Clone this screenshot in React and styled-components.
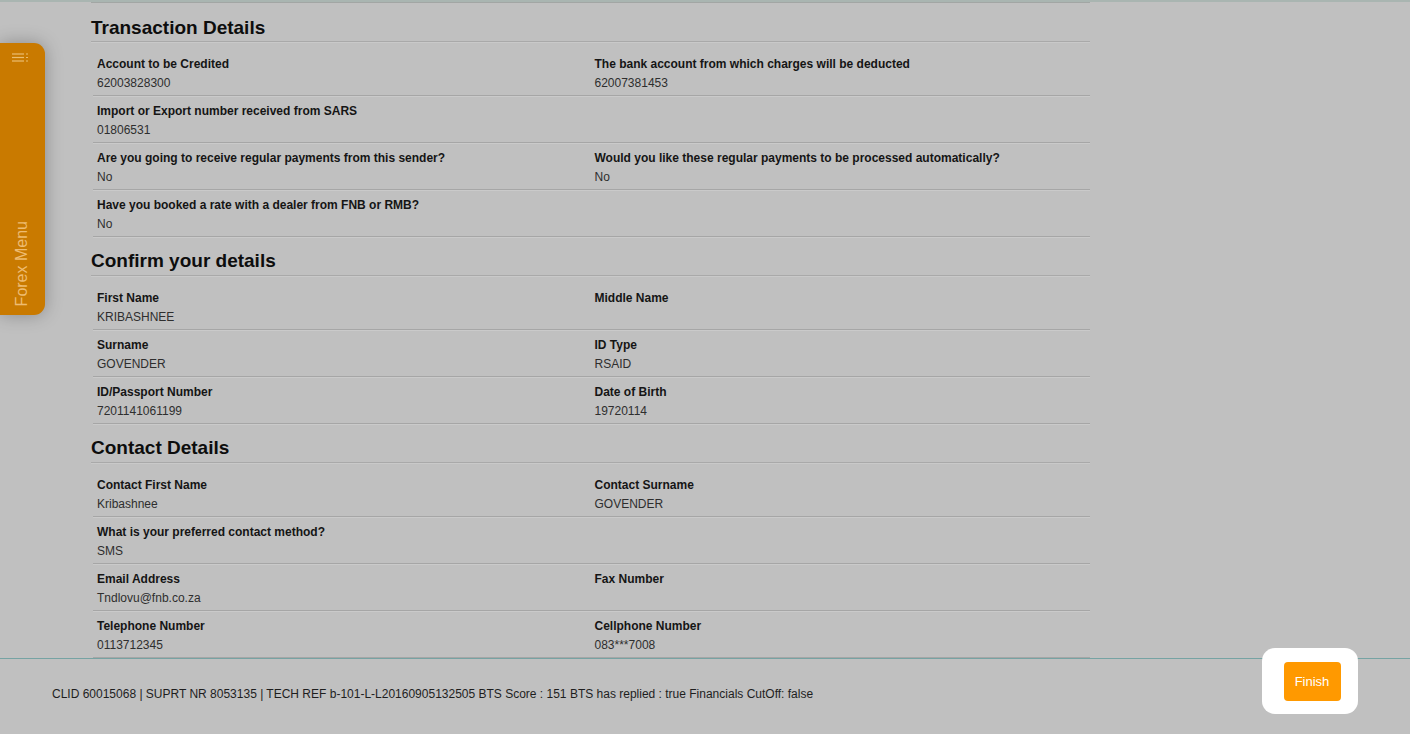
import React from 'react';
import styled, { createGlobalStyle } from 'styled-components';

const GlobalStyle = createGlobalStyle`
    html, body {
        margin: 0;
        padding: 0;
        background: #c0c0c0;
        font-family: "Liberation Sans", Arial, sans-serif;
    }
`;

const Page = styled.div`
    position: relative;
    width: 1410px;
    height: 734px;
    display: flex;
    flex-direction: column;
    overflow: hidden;
    background: #c0c0c0;
`;

const Main = styled.div`
    height: 656px;
    overflow: hidden;
    border-top: 2px solid #a9b5b1;
`;

const Content = styled.div`
    width: 999px;
    margin-left: 91px;
    border-top: 1px solid #a2a6a4;
`;

const Heading = styled.h2`
    margin: 13px 0 0 0;
    padding: 0 0 1px 0;
    font-size: 19px;
    line-height: 24px;
    font-weight: bold;
    color: #0d0d0d;
    border-bottom: 1px solid #a9a9a9;
    box-shadow: 0 1px 0 #c9c9c9;
`;

const Section = styled.div`
    & + & ${Heading} {
        margin-top: 12px;
        padding-bottom: 2px;
    }
`;

const Rows = styled.div`
    padding-top: 7px;
`;

const Row = styled.div`
    display: grid;
    grid-template-columns: 1fr 1fr;
    margin-left: 2px;
    border-bottom: 1px solid #a6a6a6;
    box-shadow: 0 1px 0 #cacaca;
`;

const Field = styled.div`
    padding: 8px 4px 5px 4px;

    & + & {
        margin-left: -1px;
    }
`;

const Label = styled.div`
    font-size: 12px;
    line-height: 14px;
    font-weight: bold;
    color: #151515;
`;

const Value = styled.div`
    margin-top: 5px;
    font-size: 12px;
    line-height: 14px;
    min-height: 14px;
    color: #2e2e2e;
`;

const Footer = styled.div`
    flex: 1;
    display: flex;
    justify-content: space-between;
    align-items: flex-start;
    border-top: 1px solid #76a3a3;
    padding: 0 52px;
`;

const FooterText = styled.div`
    margin-top: 28px;
    font-size: 12px;
    line-height: 14px;
    color: #1e1e1e;
`;

const Spotlight = styled.div`
    margin-top: -11px;
    width: 96px;
    height: 66px;
    background: #ffffff;
    border-radius: 13px;
    display: flex;
    align-items: center;
    justify-content: center;
    padding-left: 4px;
    box-sizing: border-box;
    position: relative;
`;

const FinishButton = styled.button`
    width: 57px;
    height: 39px;
    border: none;
    border-radius: 4px;
    background: #ff9900;
    color: #ffffff;
    font-family: "Liberation Sans", Arial, sans-serif;
    font-size: 13px;
    padding: 0;
    cursor: pointer;
`;

const MenuTab = styled.div`
    position: absolute;
    left: 0;
    top: 43px;
    width: 45px;
    height: 272px;
    background: #c97a00;
    border-radius: 0 11px 11px 0;
    box-shadow: 0 0 18px rgba(0, 0, 0, 0.28);
    display: flex;
    flex-direction: column;
    align-items: center;
    justify-content: space-between;
    padding: 10px 0 9px 0;
    box-sizing: border-box;
`;

const MenuIcon = styled.svg`
    margin-right: 6px;
    opacity: 0.8;
`;

const MenuLabel = styled.div`
    writing-mode: vertical-rl;
    transform: rotate(180deg);
    font-size: 16px;
    color: #eebc72;
    margin-right: 2px;
`;

const sections = [
    {
        title: 'Transaction Details',
        rows: [
            [['Account to be Credited', '62003828300'], ['The bank account from which charges will be deducted', '62007381453']],
            [['Import or Export number received from SARS', '01806531']],
            [['Are you going to receive regular payments from this sender?', 'No'], ['Would you like these regular payments to be processed automatically?', 'No']],
            [['Have you booked a rate with a dealer from FNB or RMB?', 'No']],
        ],
    },
    {
        title: 'Confirm your details',
        rows: [
            [['First Name', 'KRIBASHNEE'], ['Middle Name', '']],
            [['Surname', 'GOVENDER'], ['ID Type', 'RSAID']],
            [['ID/Passport Number', '7201141061199'], ['Date of Birth', '19720114']],
        ],
    },
    {
        title: 'Contact Details',
        rows: [
            [['Contact First Name', 'Kribashnee'], ['Contact Surname', 'GOVENDER']],
            [['What is your preferred contact method?', 'SMS']],
            [['Email Address', 'Tndlovu@fnb.co.za'], ['Fax Number', '']],
            [['Telephone Number', '0113712345'], ['Cellphone Number', '083***7008']],
        ],
    },
];

function App() {
    return (
        <Page>
            <GlobalStyle />
            <Main>
                <Content>
                    {sections.map(section => (
                        <Section key={section.title}>
                            <Heading>{section.title}</Heading>
                            <Rows>
                                {section.rows.map((row, i) => (
                                    <Row key={i}>
                                        {row.map(([label, value]) => (
                                            <Field key={label}>
                                                <Label>{label}</Label>
                                                <Value>{value}</Value>
                                            </Field>
                                        ))}
                                    </Row>
                                ))}
                            </Rows>
                        </Section>
                    ))}
                </Content>
            </Main>
            <Footer>
                <FooterText>
                    CLID 60015068 | SUPRT NR 8053135 | TECH REF b-101-L-L20160905132505 BTS Score : 151 BTS has replied : true Financials CutOff: false
                </FooterText>
                <Spotlight>
                    <FinishButton>Finish</FinishButton>
                </Spotlight>
            </Footer>
            <MenuTab>
                <MenuIcon width="18" height="9" viewBox="0 0 18 9">
                    <g stroke="#f4cf8e" strokeWidth="1.2">
                        <line x1="1" y1="1" x2="13" y2="1" />
                        <line x1="1" y1="4.5" x2="13" y2="4.5" />
                        <line x1="1" y1="8" x2="13" y2="8" />
                        <line x1="15" y1="1" x2="17" y2="1" />
                        <line x1="15" y1="4.5" x2="17" y2="4.5" />
                        <line x1="15" y1="8" x2="17" y2="8" />
                    </g>
                </MenuIcon>
                <MenuLabel>Forex Menu</MenuLabel>
            </MenuTab>
        </Page>
    );
}

export default App;
